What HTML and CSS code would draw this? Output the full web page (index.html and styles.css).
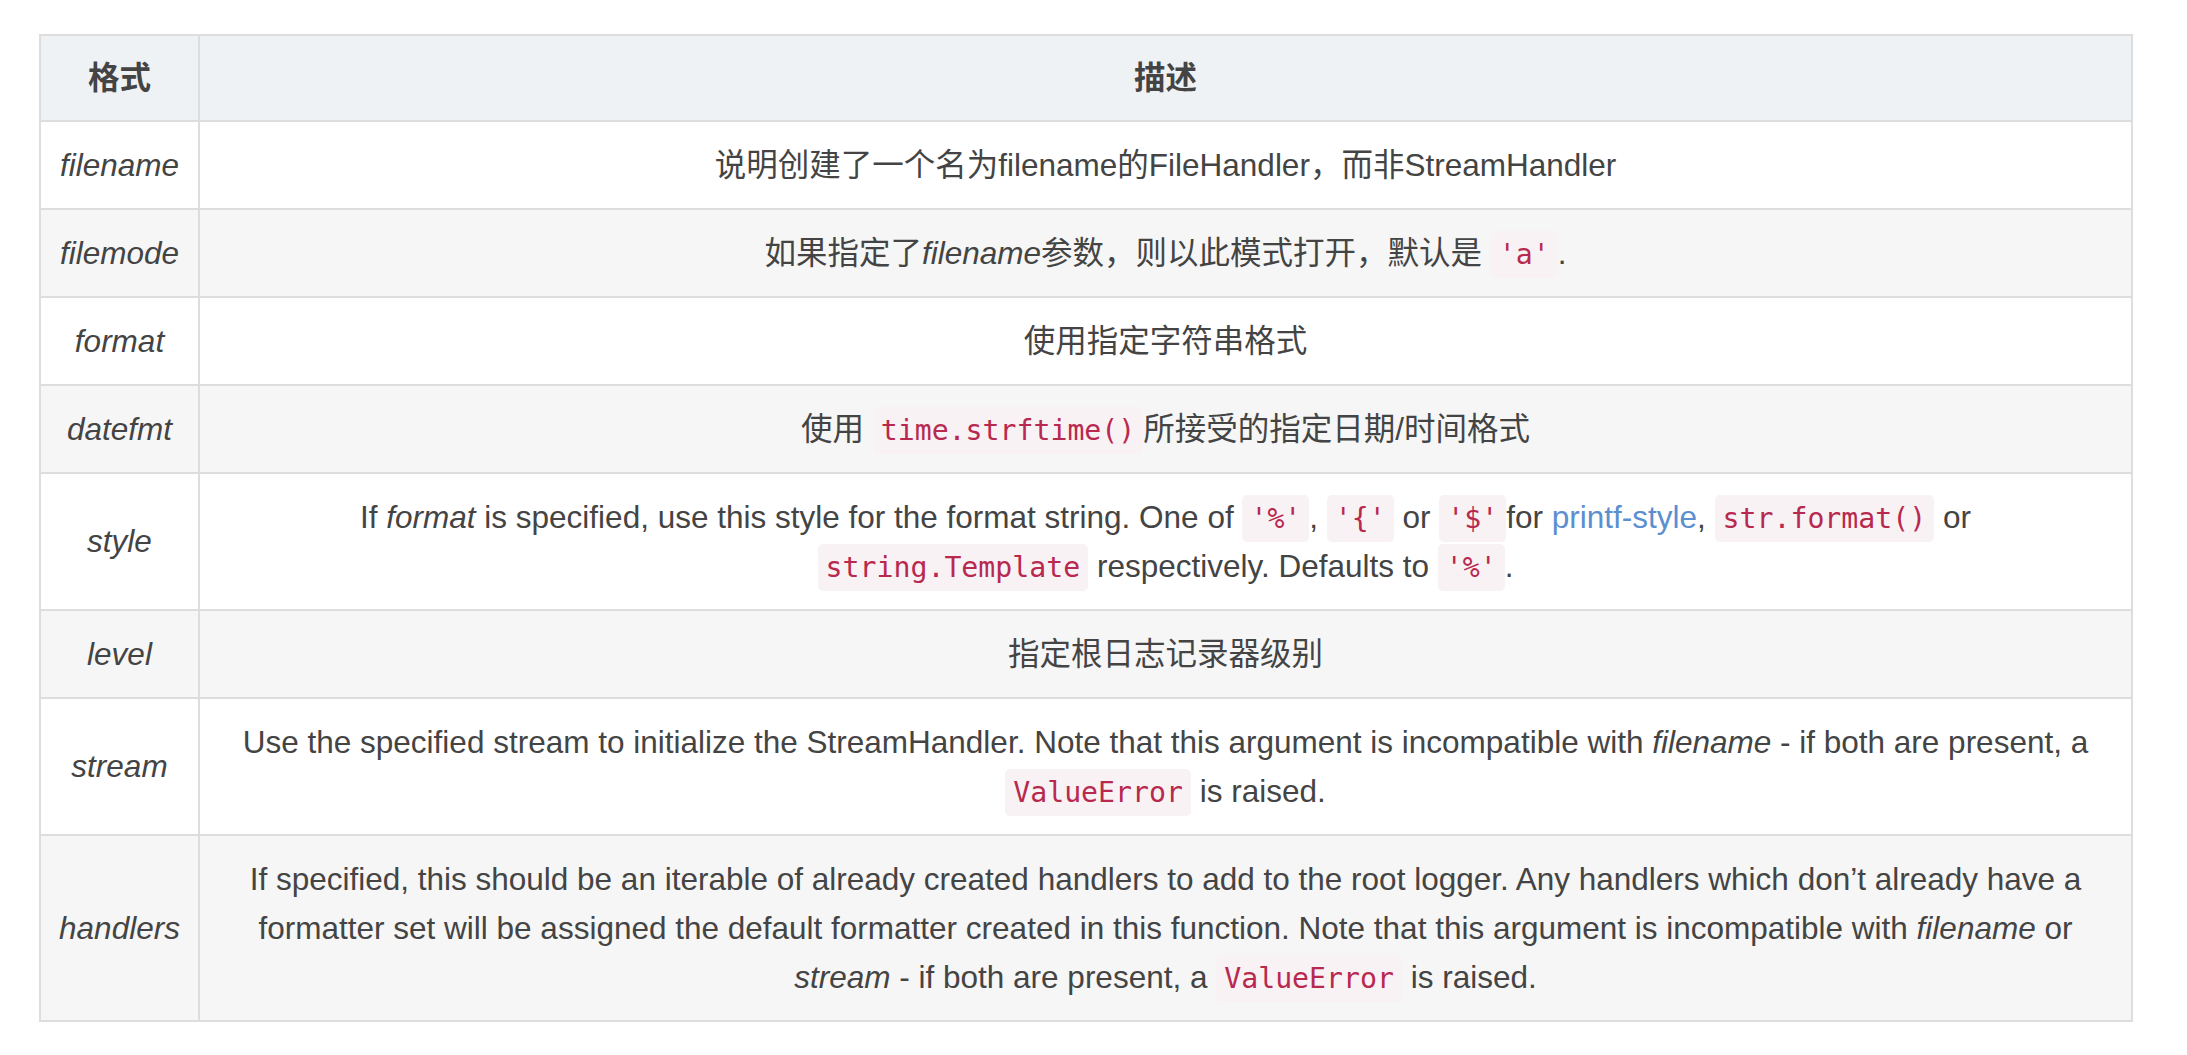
FILE: index.html
```html
<!DOCTYPE html>
<html lang="zh-CN">
<head>
<meta charset="utf-8">
<title>logging.basicConfig 参数</title>
<link rel="stylesheet" href="styles.css">
</head>
<body>
<div class="page">
  <table class="params">
    <colgroup>
      <col class="col-name">
      <col class="col-desc">
    </colgroup>
    <thead>
      <tr>
        <th>格式</th>
        <th>描述</th>
      </tr>
    </thead>
    <tbody>
      <tr>
        <td class="name"><em>filename</em></td>
        <td>说明创建了一个名为filename的FileHandler，而非StreamHandler</td>
      </tr>
      <tr>
        <td class="name"><em>filemode</em></td>
        <td>如果指定了<em>filename</em>参数，则以此模式打开，默认是 <code>'a'</code>.</td>
      </tr>
      <tr>
        <td class="name"><em>format</em></td>
        <td>使用指定字符串格式</td>
      </tr>
      <tr>
        <td class="name"><em>datefmt</em></td>
        <td>使用 <code>time.strftime()</code>所接受的指定日期/时间格式</td>
      </tr>
      <tr>
        <td class="name"><em>style</em></td>
        <td>If <em>format</em> is specified, use this style for the format string. One of <code>'%'</code>, <code>'{'</code> or <code>'$'</code>for <a href="#">printf-style</a>, <code>str.format()</code> or <code>string.Template</code> respectively. Defaults to <code>'%'</code>.</td>
      </tr>
      <tr>
        <td class="name"><em>level</em></td>
        <td>指定根日志记录器级别</td>
      </tr>
      <tr>
        <td class="name"><em>stream</em></td>
        <td>Use the specified stream to initialize the StreamHandler. Note that this argument is incompatible with <em>filename</em> - if both are present, a <code>ValueError</code> is raised.</td>
      </tr>
      <tr>
        <td class="name"><em>handlers</em></td>
        <td>If specified, this should be an iterable of already created handlers to add to the root logger. Any handlers which don’t already have a formatter set will be assigned the default formatter created in this function. Note that this argument is incompatible with <em>filename</em> or <em>stream</em> - if both are present, a <code>ValueError</code> is raised.</td>
      </tr>
    </tbody>
  </table>
</div>
</body>
</html>
```

FILE: styles.css
```css
html, body {
  margin: 0;
  padding: 0;
  background: #ffffff;
}

.page {
  padding: 34px 0 0 39px;
}

.params {
  width: 2094px;
  border-collapse: separate;
  border-spacing: 0;
  border-top: 2px solid #dddddd;
  border-left: 2px solid #dddddd;
  font-family: "Liberation Sans", Arial, "Noto Sans CJK SC", sans-serif;
  font-size: 31.5px;
  line-height: 49px;
  color: #444444;
  table-layout: fixed;
}

.col-name {
  width: 159px;
}

.params th,
.params td {
  border-right: 2px solid #dddddd;
  border-bottom: 2px solid #dddddd;
  padding: 18.5px 36px;
  text-align: center;
  vertical-align: middle;
}

.params th {
  background: #eff2f5;
  font-weight: bold;
  padding-top: 17.5px;
  padding-bottom: 17.5px;
}

.params td.name {
  padding-left: 0;
  padding-right: 0;
}

.params tbody tr:nth-child(odd) td {
  background: #ffffff;
}

.params tbody tr:nth-child(even) td {
  background: #f6f6f6;
}

.params em {
  font-style: italic;
}

.params code {
  font-family: "DejaVu Sans Mono", "Liberation Mono", monospace;
  font-size: 28.2px;
  line-height: 1;
  color: #b8294f;
  background: #f9f2f4;
  padding: 7px 8px;
  border-radius: 5px;
}

.params a {
  color: #5b8fd0;
  text-decoration: none;
}
```
